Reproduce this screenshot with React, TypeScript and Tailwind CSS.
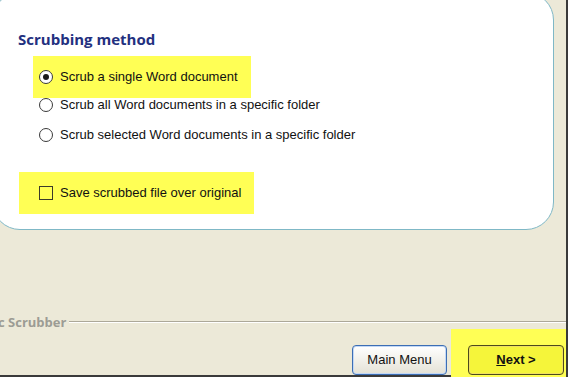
import React from "react";

function Radio({ checked }: { checked?: boolean }) {
  return (
    <span className="w-[14px] h-[14px] rounded-full border-[1.5px] border-[#3a3a3a] bg-white flex items-center justify-center shrink-0">
      {checked && <span className="w-[6px] h-[6px] rounded-full bg-[#1a1a1a]" />}
    </span>
  );
}

export default function App() {
  const font = { fontFamily: "'Open Sans', 'DejaVu Sans', sans-serif" };
  return (
    <div className="w-[571px] h-[380px] bg-white overflow-hidden" style={{ fontFamily: "'Liberation Sans', Arial, sans-serif" }}>
      <div className="w-[568px] h-[377px] bg-[#ECE9D8] border-r-2 border-b-2 border-[#3a3a3a] flex flex-col">
        <div className="-mt-[8px] -ml-[8px] w-[562px] h-[238px] bg-white border border-[#7fb8c6] rounded-[28px] pl-[25px] pt-[37px] shrink-0">
          <div className="text-[15px] font-bold text-[#23307f] leading-[18px]" style={font}>
            Scrubbing method
          </div>
          <div className="mt-[8px] ml-[15px] w-[218px] h-[42px] bg-[#FFFF55] flex items-center pl-[6px] gap-[7px] text-[13px] text-[#111]">
            <Radio checked />
            <span>Scrub a single Word document</span>
          </div>
          <div className="h-[14px] flex items-center pl-[21px] gap-[7px] text-[13px] text-[#111]">
            <Radio />
            <span>Scrub all Word documents in a specific folder</span>
          </div>
          <div className="h-[14px] mt-[16px] flex items-center pl-[21px] gap-[7px] text-[13px] text-[#111]">
            <Radio />
            <span>Scrub selected Word documents in a specific folder</span>
          </div>
          <div className="mt-[30px] ml-[1px] w-[235px] h-[42px] bg-[#FFFF55] flex items-center pl-[20px] gap-[7px] text-[13px] text-[#111]">
            <span className="w-[14px] h-[14px] border-[1.5px] border-[#3b3b2a] bg-transparent shrink-0" />
            <span>Save scrubbed file over original</span>
          </div>
        </div>
        <div className="mt-[85px] flex items-center -ml-[2px]">
          <span className="text-[13px] font-bold text-[#9c9c94] leading-[14px]" style={font}>
            c Scrubber
          </span>
          <div className="flex-1 ml-[3px] border-t border-t-[#aca899] border-b border-b-white" />
        </div>
        <div className="flex-1 flex justify-end items-end">
          <button className="mb-[2px] w-[95px] h-[30px] rounded-[4px] border border-[#3c6eb4] bg-gradient-to-b from-white to-[#e4e2d6] text-[13px] text-[#111] shadow-[inset_0_0_0_1px_#c3d8f5]">
            Main Menu
          </button>
          <div className="ml-[4px] w-[115px] h-[48px] bg-[#FFFF55] flex items-end justify-end pr-[2px]">
            <button className="w-[96px] h-[30px] mb-[2px] rounded-[4px] border border-[#4d4a1c] bg-[#f5f53a] text-[13px] font-bold text-[#111] shadow-[inset_0_0_0_1px_#f0e060]">
              <span className="underline">N</span>ext &gt;
            </button>
          </div>
        </div>
      </div>
    </div>
  );
}
